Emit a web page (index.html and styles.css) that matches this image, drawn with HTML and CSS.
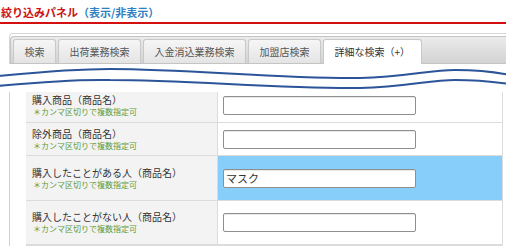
FILE: index.html
```html
<!DOCTYPE html>
<html lang="ja">
<head>
<meta charset="utf-8">
<title>絞り込みパネル</title>
<link rel="stylesheet" href="styles.css">
</head>
<body>
<div class="page">
  <h2 class="title"><span class="title-main">絞り込みパネル</span><a class="title-toggle">（表示/非表示）</a></h2>
  <div class="panel-top">
    <ul class="tabs">
      <li class="tab">検索</li>
      <li class="tab">出荷業務検索</li>
      <li class="tab">入金消込業務検索</li>
      <li class="tab">加盟店検索</li>
      <li class="tab tab-active">詳細な検索（+）</li>
    </ul>
  </div>
  <div class="break">
    <svg class="wave" width="506" height="28" viewBox="0 0 506 28">
      <path d="M-2,12 C30,9 70,5 110,5 C190,5 280,15 360,14 C405,13 430,6 455,6 C480,6 495,8 510,11" />
      <path d="M-2,22 C30,19 70,15 110,16 C190,16 280,25 360,24 C405,23 430,16 455,16 C480,16 495,18 510,20" />
    </svg>
  </div>
  <div class="panel-bottom">
    <div class="form">
      <div class="row row-cut">
        <div class="label"><span class="label-main">購入商品（商品名）</span><span class="label-note">＊カンマ区切りで複数指定可</span></div>
        <div class="field"><input class="text-input" type="text"></div>
      </div>
      <div class="row">
        <div class="label"><span class="label-main">除外商品（商品名）</span><span class="label-note">＊カンマ区切りで複数指定可</span></div>
        <div class="field"><input class="text-input" type="text"></div>
      </div>
      <div class="row row-tall">
        <div class="label"><span class="label-main">購入したことがある人（商品名）</span><span class="label-note">＊カンマ区切りで複数指定可</span></div>
        <div class="field field-active"><input class="text-input" type="text" value="マスク"></div>
      </div>
      <div class="row row-tall row-last">
        <div class="label"><span class="label-main">購入したことがない人（商品名）</span><span class="label-note">＊カンマ区切りで複数指定可</span></div>
        <div class="field"><input class="text-input" type="text"></div>
      </div>
    </div>
  </div>
</div>
</body>
</html>
```

FILE: styles.css
```css
* { box-sizing: border-box; }
html, body {
  margin: 0;
  padding: 0;
  background: #fff;
  overflow: hidden;
}
body {
  width: 506px;
  height: 246px;
  font-family: "Noto Sans CJK JP", "Noto Sans", sans-serif;
  color: #333;
}
.page { width: 506px; }

.title {
  margin: 0;
  height: 24px;
  padding-left: 1px;
  font-size: 11px;
  line-height: 24px;
  font-weight: bold;
  border-bottom: 2px solid #d40f0f;
  white-space: nowrap;
}
.title-main { color: #cc1010; }
.title-toggle { color: #2f80c2; text-decoration: none; }

.panel-top {
  margin: 9px -30px 0 9px;
  border-top: 1px solid #d6d6d6;
  border-left: 1px solid #d6d6d6;
  border-top-left-radius: 4px;
  padding: 2px 0 0 0;
  height: 31px;
}
.tabs {
  list-style: none;
  margin: 0;
  height: 28px;
  padding: 2px 0 0 2px;
  border: 1px solid #c4c4c4;
  border-right: none;
  border-top-left-radius: 4px;
  background: linear-gradient(#ebebeb, #d3d3d3);
  display: flex;
  gap: 2px;
  align-items: flex-start;
}
.tab {
  height: 24px;
  padding: 0 10.5px;
  border: 1px solid #c8c8c8;
  border-bottom: none;
  border-radius: 3px 3px 0 0;
  background: linear-gradient(#f6f6f6, #e4e4e4);
  color: #555;
  font-size: 10px;
  line-height: 23px;
  white-space: nowrap;
}
.tab-active {
  height: 25px;
  margin-top: 0;
  margin-bottom: -1px;
  background: #fff;
  color: #333;
}

.break {
  position: relative;
  z-index: 1;
  height: 28px;
  margin-bottom: -3px;
  background: #fff;
}
.wave { display: block; }
.wave path {
  fill: none;
  stroke: #2b5499;
  stroke-width: 2;
}

.panel-bottom {
  margin-left: 9px;
  border-left: 1px solid #d0d0d0;
  padding-left: 16px;
}
.form {
  width: 477px;
  border-right: 1px solid #dcdcdc;
}
.row {
  display: grid;
  grid-template-columns: 192px 284px;
  height: 33px;
  border-bottom: 1px solid #dcdcdc;
}
.row-cut { height: 34px; }
.row-tall { height: 45px; }
.row-last { height: 45px; border-bottom-width: 2px; }

.label {
  background: #f2f3f2;
  border-right: 1px solid #dcdcdc;
  padding: 0 0 1px 6px;
  display: flex;
  flex-direction: column;
  justify-content: center;
  white-space: nowrap;
}
.label-main {
  font-size: 10px;
  line-height: 13px;
  color: #333;
}
.label-note {
  font-size: 8px;
  line-height: 11px;
  color: #5f9a3a;
  padding-left: 1px;
}
.field {
  display: flex;
  align-items: center;
  padding-left: 5px;
  background: #fff;
}
.field-active { background: #87cefa; }
.text-input {
  width: 193px;
  height: 19px;
  margin: 0;
  padding: 0 2px;
  border: 1px solid #8f8f8f;
  border-radius: 2px;
  box-shadow: inset 0 1px 0 #e8e8e8;
  background: #fff;
  font-family: "Noto Sans CJK JP", sans-serif;
  font-size: 11px;
  color: #333;
  outline: none;
}
```
